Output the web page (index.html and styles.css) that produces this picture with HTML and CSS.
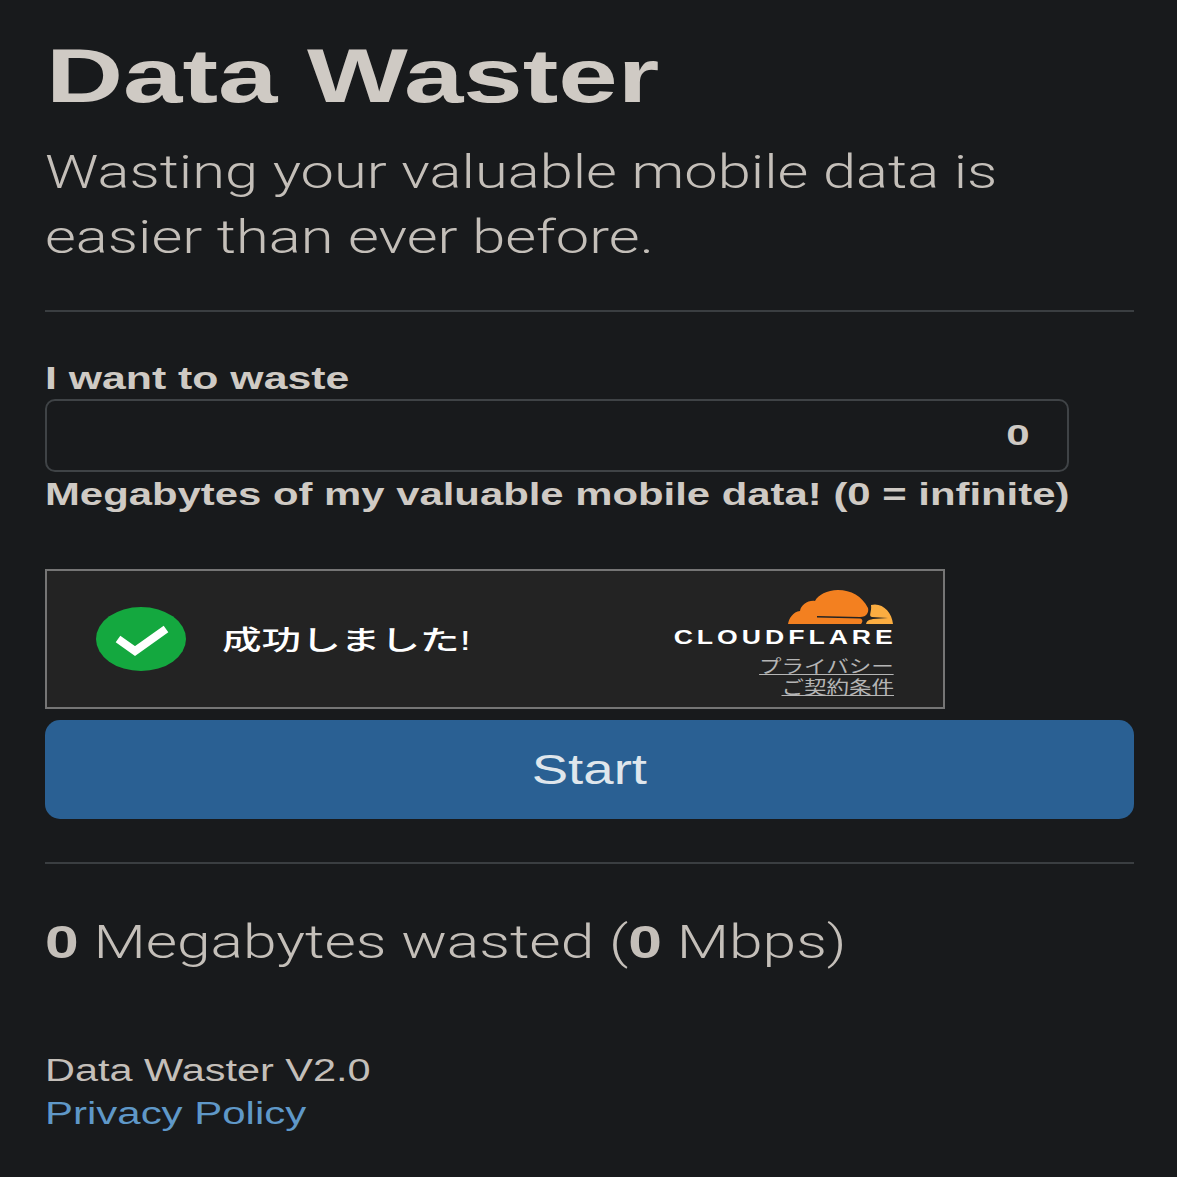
FILE: index.html
```html
<!DOCTYPE html>
<html lang="en">
<head>
<meta charset="utf-8">
<title>Data Waster</title>
<link rel="stylesheet" href="styles.css">
</head>
<body>
<main class="page">
  <h1 class="title"><span class="wide wide-title">Data Waster</span></h1>
  <p class="lead"><span class="wide wide-lead">Wasting your valuable mobile data is</span><br><span class="wide wide-lead">easier than ever before.</span></p>
  <hr class="rule rule-top">
  <label class="label label-above" for="mb"><span class="wide wide-label">I want to waste</span></label>
  <div class="field" id="mb"><span class="wide wide-right">0</span></div>
  <div class="label label-below"><span class="wide wide-below">Megabytes of my valuable mobile data! (0 = infinite)</span></div>
  <section class="widget">
    <svg class="check" viewBox="0 0 90 64" aria-hidden="true">
      <ellipse cx="45" cy="32" rx="45" ry="32" fill="#14a83f"/>
      <path d="M22 32 L39 44 L70 22" fill="none" stroke="#fff" stroke-width="8"/>
    </svg>
    <div class="status"><span class="wide wide-status">成功しました!</span></div>
    <div class="brand">
      <svg class="cloud" viewBox="0 0 106 36" aria-hidden="true">
        <path fill="#f38020" d="M0 34 C1 28 5 22 12 21 C13 15 20 10 27 11 C30 5 39 0 50 0 C63 0 74 6 80 18 C81 22 79 27 72 27 L29 26 L29 27.5 L72 28.5 C75 29 75 32 73 34 Z"/>
        <path fill="#fbad41" d="M83 15 C94 12 104 22 105 34 L78 34 C79 31 80 30 85 29 L100 28 L84 27 C80 26 84 22 83 15 Z"/>
      </svg>
      <div class="logotype"><span class="wide wide-logo">CLOUDFLARE</span></div>
      <a class="legal legal-first"><span class="wide wide-legal">プライバシー</span></a>
      <a class="legal"><span class="wide wide-legal">ご契約条件</span></a>
    </div>
  </section>
  <button class="start" type="button"><span class="wide wide-start">Start</span></button>
  <hr class="rule rule-bottom">
  <p class="stats"><span class="wide wide-stats"><b>0</b> Megabytes wasted (<b>0</b> Mbps)</span></p>
  <footer class="foot">
    <div class="version"><span class="wide wide-version">Data Waster V2.0</span></div>
    <a class="policy"><span class="wide wide-policy">Privacy Policy</span></a>
  </footer>
</main>
</body>
</html>
```
FILE: styles.css
```css
* { box-sizing: border-box; }
html, body { margin: 0; height: 100%; }
body {
  background: #181a1c;
  color: #cfcac4;
  font-family: "Liberation Sans", "Noto Sans CJK JP", sans-serif;
  overflow: hidden;
}
.page { padding: 0 43px 0 45px; }
.wide {
  display: inline-block;
  transform-origin: left center;
  white-space: nowrap;
}
.wide-title { transform: scaleX(1.405); }
.wide-lead { transform: scaleX(1.296); }
.wide-label { transform: scaleX(1.38); }
.wide-below { transform: scaleX(1.35); }
.wide-right { transform: scaleX(1.4); transform-origin: right center; }
.wide-status { transform: scaleX(1.467); }
.wide-logo { transform: scaleX(1.33); transform-origin: right center; }
.wide-legal {
  transform: scaleX(1.25);
  transform-origin: right center;
  text-decoration: underline;
}
.wide-start { transform: scaleX(1.3); transform-origin: center; }
.wide-stats { transform: scaleX(1.315); }
.wide-version { transform: scaleX(1.337); }
.wide-policy { transform: scaleX(1.354); }
.title {
  margin: 0 0 0 1px;
  height: 135px;
  padding-top: 32px;
  font-size: 76px;
  line-height: 87px;
  font-weight: 700;
}
.lead {
  margin: 0;
  padding-top: 5px;
  height: 135px;
  font-family: Roboto, "Liberation Sans", sans-serif;
  font-size: 46px;
  line-height: 65px;
  font-weight: 300;
  color: #c4bfb9;
}
.rule { margin: 0; border: 0; height: 2px; background: #3a3e41; }
.rule-top { margin-top: 40px; }
.label { display: block; font-weight: 700; font-size: 31px; }
.label-above { margin-top: 48px; height: 39px; line-height: 38px; }
.field {
  width: 1024px;
  height: 73px;
  border: 2px solid #3f4346;
  border-radius: 10px;
  padding-right: 37px;
  text-align: right;
  font-weight: 700;
  font-size: 30px;
  line-height: 68px;
}
.label-below { height: 97px; line-height: 46px; }
.widget {
  width: 900px;
  height: 140px;
  background: #232323;
  border: 2px solid #757575;
  display: flex;
  align-items: flex-start;
  padding: 0 49px;
}
.check { width: 90px; height: 64px; flex: none; margin-top: 36px; }
.status {
  margin: 38px 0 0 36px;
  flex: 1;
  color: #fff;
  font-size: 27px;
  line-height: 64px;
  font-weight: 500;
}
.brand {
  width: 240px;
  display: flex;
  flex-direction: column;
  align-items: flex-end;
  padding-top: 19px;
}
.cloud { width: 106px; height: 36px; display: block; }
.logotype {
  color: #fff;
  font-weight: 700;
  font-size: 20px;
  letter-spacing: 3px;
  line-height: 22px;
  margin: 0 -3px 0 0;
}
.legal {
  color: #b5b5b5;
  font-size: 18px;
  line-height: 21px;
}
.legal-first { margin-top: 9px; }
.start {
  display: block;
  width: 100%;
  height: 99px;
  margin-top: 11px;
  padding: 1px 0 0;
  background: #2a6093;
  color: #dfe6ec;
  border: 0;
  border-radius: 15px;
  font-family: inherit;
  font-size: 42px;
}
.rule-bottom { margin-top: 43px; }
.stats {
  margin: 0;
  padding-top: 49px;
  height: 185px;
  font-family: Roboto, "Liberation Sans", sans-serif;
  font-size: 46px;
  line-height: 58px;
  font-weight: 300;
  color: #c4bfb9;
}
.stats b { font-family: "Liberation Sans", sans-serif; font-weight: 700; }
.foot { font-size: 31px; line-height: 43px; }
.version { color: #c4bfb9; }
.policy { color: #5f98c8; display: block; }
```
